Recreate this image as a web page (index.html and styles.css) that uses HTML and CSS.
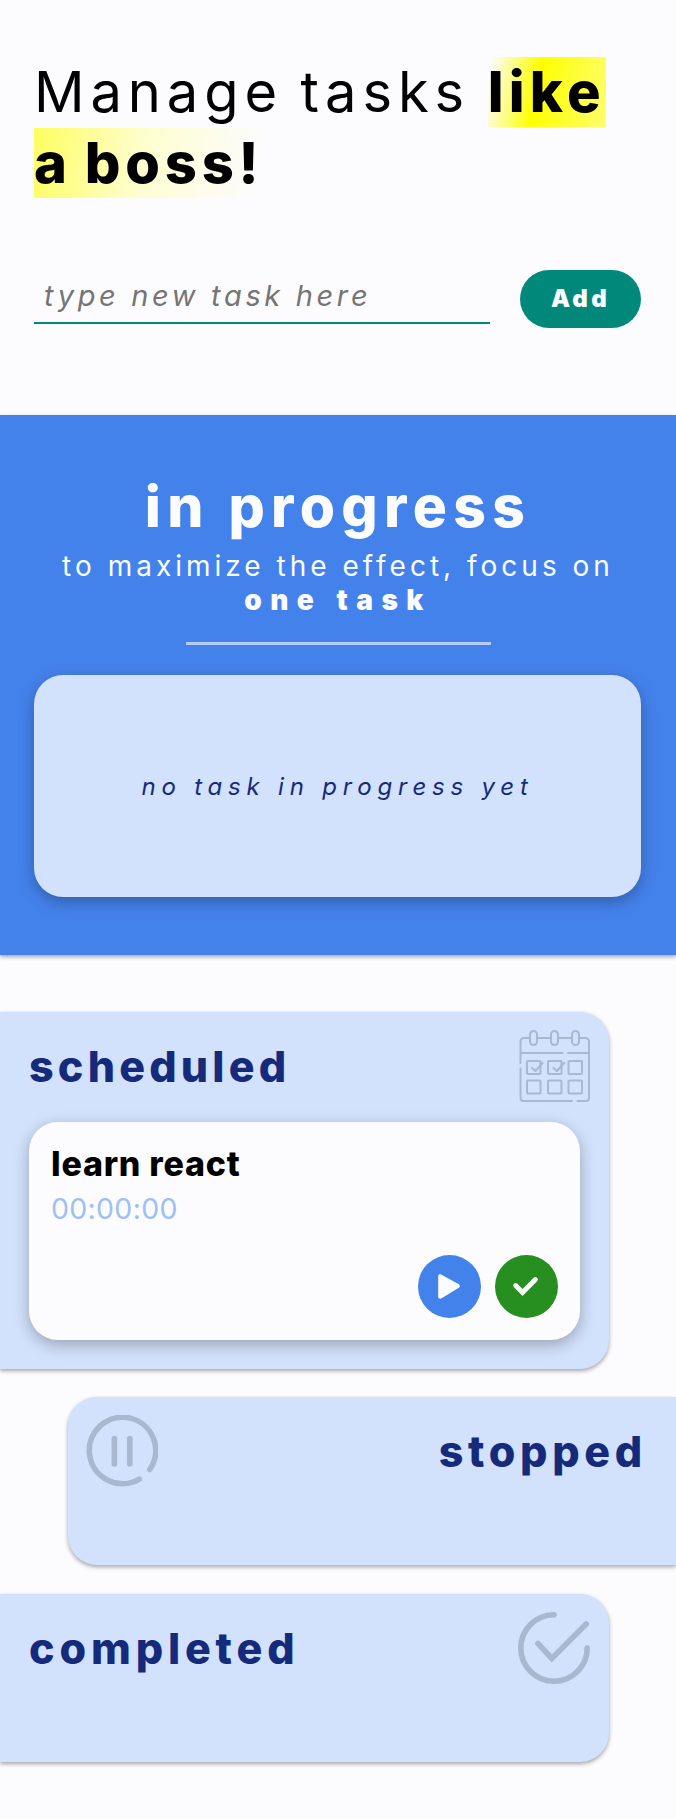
FILE: index.html
```html
<!DOCTYPE html>
<html lang="en">
<head>
<meta charset="utf-8">
<title>Task manager</title>
<link rel="stylesheet" href="styles.css">
</head>
<body>
<header class="intro">
  <h1 class="headline">Manage tasks <strong class="marker">like<br><span class="marker-second">a boss!</span></strong></h1>
  <form class="add-form">
    <input class="task-input" type="text" placeholder="type new task here">
    <button class="add-button" type="button">Add</button>
  </form>
</header>
<main>
  <section class="progress">
    <h2 class="progress-title">in progress</h2>
    <p class="progress-text">to maximize the effect, focus on<br><strong>one task</strong></p>
    <hr class="divider">
    <div class="empty-card"><p class="empty-text">no task in progress yet</p></div>
  </section>
  <div class="lists">
    <section class="list list-left">
      <h2 class="list-title">scheduled</h2>
      <svg class="list-icon" viewBox="0 0 72 72" fill="none" stroke="#a9b7cf" stroke-width="2" stroke-linecap="round" stroke-linejoin="round">
        <path d="M12 8H6a3.500 3.500 0 0 0-3.500 3.500V33M2.500 38.500V68a3 3 0 0 0 3 3H54M59.500 71H68a3 3 0 0 0 3-3V11.500A3.500 3.500 0 0 0 67.500 8H62M20 8h13M41 8h13M3.500 23H44.500M50 23h20"/>
        <rect x="12" y="1" width="7" height="14" rx="3.500"/>
        <rect x="33" y="1" width="7" height="14" rx="3.500"/>
        <rect x="54" y="1" width="7" height="14" rx="3.500"/>
        <rect x="9" y="31" width="13.500" height="13" rx="1"/>
        <rect x="30" y="31" width="13.500" height="13" rx="1"/>
        <rect x="50.500" y="31" width="13.500" height="13" rx="1"/>
        <rect x="9" y="50.500" width="13.500" height="13" rx="1"/>
        <rect x="30" y="50.500" width="13.500" height="13" rx="1"/>
        <rect x="50.500" y="50.500" width="13.500" height="13" rx="1"/>
        <path d="M14 38l3.500 3 7-8M35.500 38l3.500 3 7-8"/>
      </svg>
      <article class="task">
        <h3 class="task-name">learn react</h3>
        <p class="task-time">00:00:00</p>
        <div class="task-actions">
          <button class="round-button start" type="button" aria-label="Start">
            <svg viewBox="0 0 64 64"><path d="M22.500 21.500v21L40.500 31.500z" fill="#fcfcff" stroke="#fcfcff" stroke-width="4" stroke-linejoin="round"/></svg>
          </button>
          <button class="round-button done" type="button" aria-label="Complete">
            <svg viewBox="0 0 64 64"><path d="M21 31l7 7L41 25" fill="none" stroke="#fcfcff" stroke-width="5" stroke-linecap="round"/></svg>
          </button>
        </div>
      </article>
    </section>
    <section class="list list-right">
      <h2 class="list-title list-title-stopped">stopped</h2>
      <svg class="list-icon" viewBox="0 0 72 72" fill="none" stroke="#a9b7cf" stroke-width="5.600" stroke-linecap="round">
        <path d="M53.300 64.100A33.200 33.200 0 1 1 63.700 54.500M28.400 23.500V49M43.800 23.500V49"/>
      </svg>
    </section>
    <section class="list list-left">
      <h2 class="list-title list-title-completed">completed</h2>
      <svg class="list-icon" viewBox="0 0 72 72" fill="none" stroke="#a9b7cf" stroke-width="5.600" stroke-linecap="round">
        <path d="M36 2.800A33.200 33.200 0 1 0 69.200 36M20 31.500L33.800 46.500L68.200 12"/>
      </svg>
    </section>
  </div>
</main>
</body>
</html>
```
FILE: styles.css
```css
* {
  box-sizing: border-box;
  margin: 0;
  padding: 0;
}

body {
  min-height: 1818px;
  overflow-x: hidden;
  background: #fcfcff;
  color: #000;
  font-family: Inter, "Open Sans", sans-serif;
}

.intro {
  height: 414.5px;
  padding: 57px 34px 0;
}

.headline {
  height: 142px;
  font-size: 56px;
  font-weight: 400;
  line-height: 71px;
  letter-spacing: 5.900px;
  word-spacing: -4px;
  white-space: nowrap;
}

.marker {
  padding: 1px 0;
  background: linear-gradient(100deg, rgba(255, 255, 0, 0) 0.900%, #ff0 15%, rgba(255, 255, 0, 0.600) 35%, rgba(255, 255, 170, 0.550) 65%, rgba(255, 255, 255, 0) 98%);
  font-weight: 800;
  letter-spacing: 5.200px;
}

.marker-second {
  letter-spacing: 4.800px;
}

.add-form {
  display: flex;
  align-items: flex-start;
  gap: 30px;
  margin-top: 71px;
}

.task-input {
  width: 456px;
  height: 54px;
  padding: 0 10px 2px;
  border: 0;
  border-bottom: 2px solid #00897b;
  background: transparent;
  font: 400 29px/50px Inter, sans-serif;
  letter-spacing: 3.650px;
}

.task-input::placeholder {
  color: #757575;
  font-style: italic;
}

.add-button {
  width: 121px;
  height: 57.500px;
  padding-top: 1px;
  border: 0;
  border-radius: 29px;
  background: #00897b;
  color: #fcfcff;
  font: 900 24px/56px Inter, sans-serif;
  letter-spacing: 3.300px;
}

.progress {
  display: flex;
  flex-direction: column;
  align-items: center;
  height: 540px;
  padding: 57.500px 34px 0;
  background: #4482eb;
  box-shadow: 0 2px 4px rgba(0, 0, 0, 0.350);
  color: #fcfcff;
  text-align: center;
}

.progress-title {
  font-size: 57px;
  font-weight: 800;
  line-height: 70px;
  letter-spacing: 6.300px;
}

.progress-text {
  margin-top: 7px;
  font-size: 28px;
  line-height: 34px;
  letter-spacing: 4px;
  white-space: nowrap;
}

.progress-text strong {
  font-weight: 900;
  letter-spacing: 8.500px;
}

.divider {
  width: 305px;
  height: 3px;
  margin-top: 25px;
  border: 0;
  background: #b5cdf7;
}

.empty-card {
  display: flex;
  align-items: center;
  justify-content: center;
  align-self: flex-start;
  width: 607px;
  height: 222px;
  margin-top: 30px;
  border-radius: 29px;
  background: #d2e1fc;
  box-shadow: 0 5px 16px rgba(0, 0, 0, 0.270);
}

.empty-text {
  color: #152a7b;
  font-size: 24px;
  font-style: italic;
  letter-spacing: 5.800px;
}

.lists {
  display: flex;
  flex-direction: column;
  gap: 28.500px;
  margin-top: 57.500px;
}

.list {
  position: relative;
  width: 608.500px;
  min-height: 168px;
  padding: 28px 29px 29px;
  background: #d2e1fc;
  box-shadow: 0 2px 4px rgba(0, 0, 0, 0.350);
}

.list-left {
  border-radius: 0 29px 29px 0;
}

.list-right {
  align-self: flex-end;
  border-radius: 29px 0 0 29px;
  text-align: right;
}

.list-icon {
  position: absolute;
  top: 18px;
  right: 19px;
  width: 72px;
  height: 72px;
}

.list-right .list-icon {
  right: auto;
  left: 18.500px;
}

.list-title {
  color: #152a7b;
  font-size: 43px;
  font-weight: 800;
  line-height: 52px;
  letter-spacing: 4.200px;
}

.list-title-stopped {
  letter-spacing: 4.700px;
}

.list-title-completed {
  letter-spacing: 4.850px;
}

.task {
  display: flex;
  flex-direction: column;
  width: 551px;
  height: 217.500px;
  margin-top: 30px;
  padding: 22px;
  border-radius: 29px;
  background: #fcfcff;
  box-shadow: 0 5px 16px rgba(0, 0, 0, 0.270);
}

.task-name {
  font-size: 34px;
  font-weight: 800;
  line-height: 40px;
  letter-spacing: 0.750px;
}

.task-time {
  margin-top: 8px;
  color: #9ec0f5;
  font-size: 28.500px;
  font-weight: 400;
  line-height: 34px;
  letter-spacing: 0.300px;
}

.task-actions {
  display: flex;
  justify-content: flex-end;
  gap: 14px;
  margin-top: auto;
}

.round-button {
  width: 63px;
  height: 63px;
  border: 0;
  border-radius: 50%;
}

.round-button svg {
  display: block;
  width: 100%;
  height: 100%;
}

.start {
  background: #4482eb;
}

.done {
  background: #278f20;
}
```
